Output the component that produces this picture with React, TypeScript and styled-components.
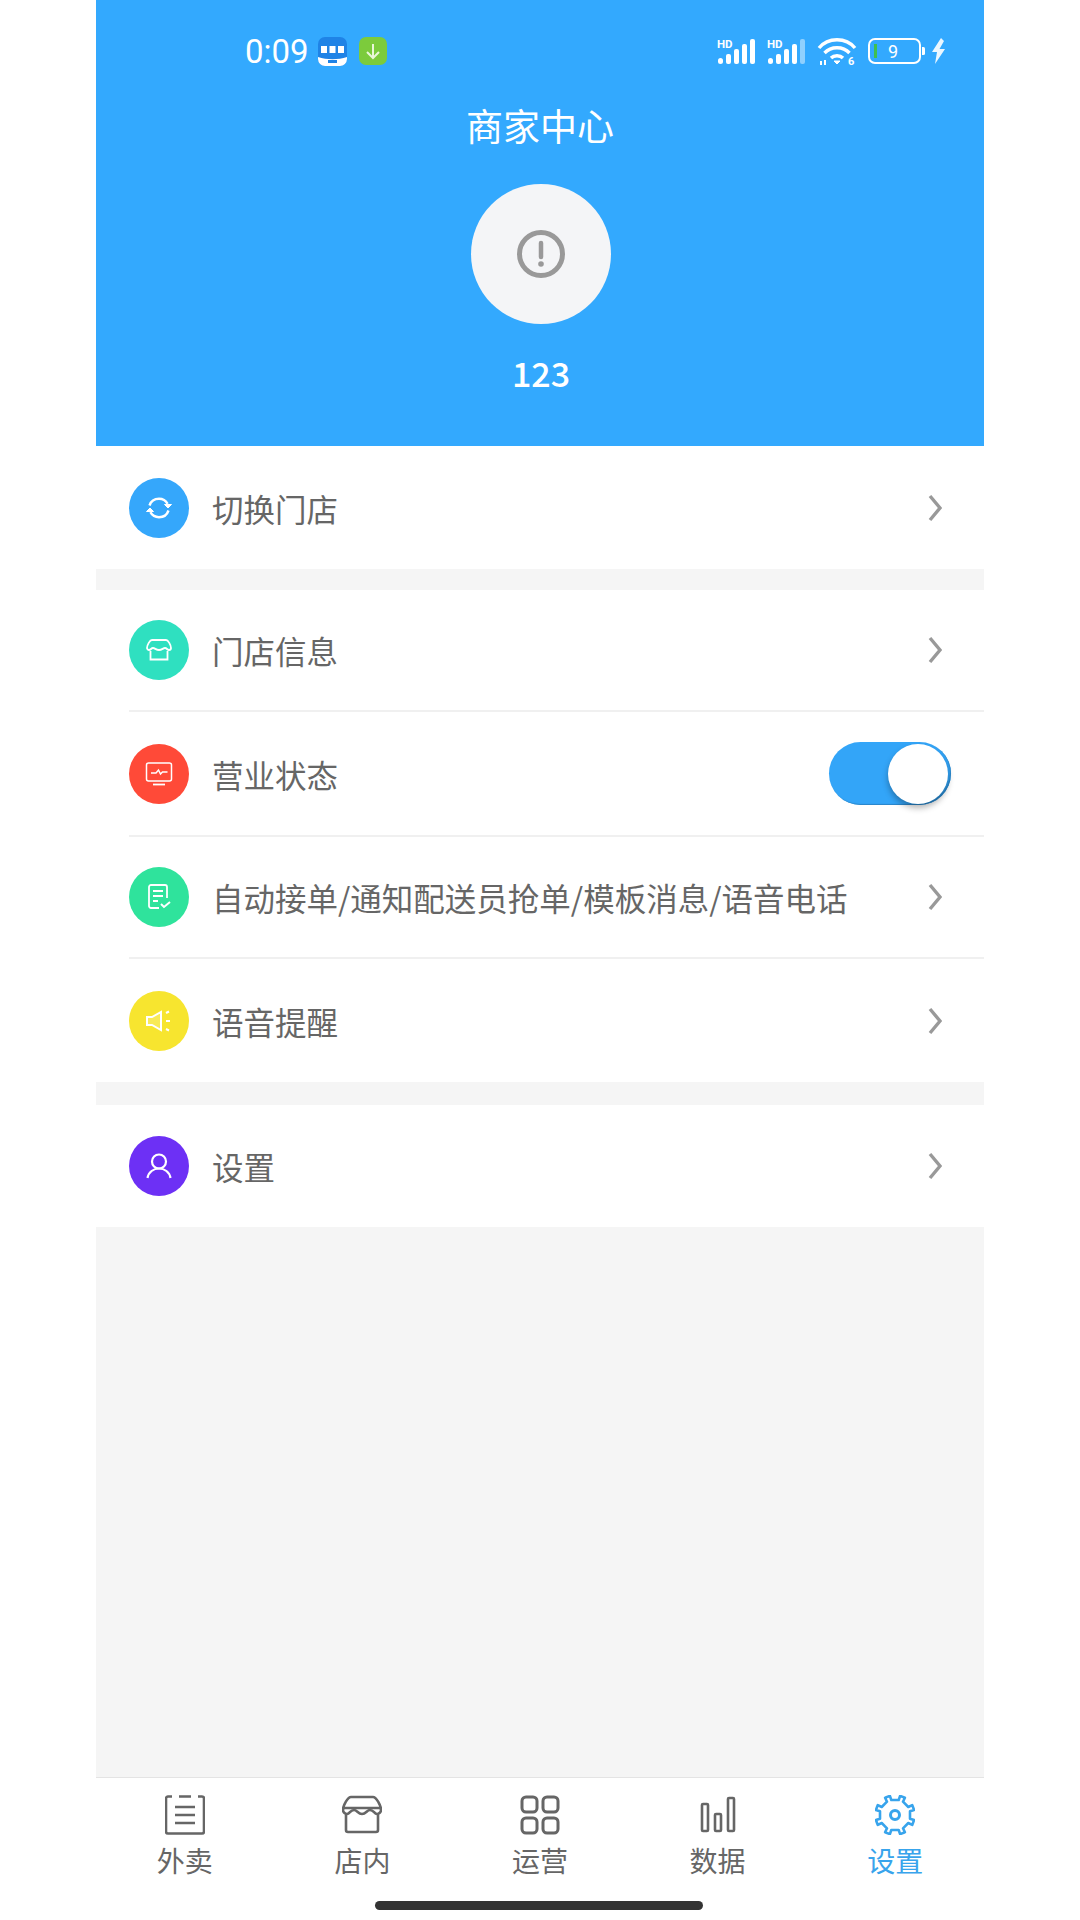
import styled, { createGlobalStyle } from 'styled-components';

const GlobalStyle = createGlobalStyle`
  html, body {
    margin: 0;
    padding: 0;
    background: #fff;
  }
  * {
    box-sizing: border-box;
  }
`;

const CJK = `"Noto Sans CJK SC", "Noto Sans", sans-serif`;

const Page = styled.div`
  width: 888px;
  height: 1920px;
  margin: 0 auto;
  display: flex;
  flex-direction: column;
  background: #f5f5f5;
  font-family: ${CJK};
`;

const Header = styled.header`
  height: 446px;
  flex: none;
  display: flex;
  flex-direction: column;
  align-items: center;
  background: #33a9fe;
  color: #fff;
`;

const StatusBar = styled.div`
  width: 100%;
  height: 102px;
  padding: 0 39px 0 149px;
  display: flex;
  align-items: center;
  justify-content: space-between;
`;

const StatusGroup = styled.div`
  display: flex;
  align-items: center;
`;

const Time = styled.span`
  font: 400 33px/1 Roboto, sans-serif;
  width: 73px;
`;

const AppBadge = styled.svg`
  display: block;
  margin-right: 12px;
`;

const SignalIcon = styled.svg`
  display: block;
  margin-right: 10px;
`;

const Title = styled.h1`
  margin: 0;
  height: 46px;
  font-size: 37px;
  line-height: 46px;
  font-weight: 400;
`;

const Avatar = styled.div`
  width: 140px;
  height: 140px;
  margin: 36px 0 0 2px;
  border-radius: 50%;
  background: #f4f5f7;
  display: flex;
  align-items: center;
  justify-content: center;
`;

const Name = styled.div`
  margin: 26px 0 0 2px;
  font-size: 34px;
  line-height: 46px;
  font-weight: 500;
`;

const Group = styled.section<{ $top?: number }>`
  flex: none;
  margin-top: ${(p) => p.$top ?? 0}px;
  padding-left: 33px;
  background: #fff;
`;

const Row = styled.div<{ $h: number; $line?: boolean }>`
  height: ${(p) => p.$h}px;
  padding-right: 33px;
  display: flex;
  align-items: center;
  border-bottom: ${(p) => (p.$line ? '2px solid #f0f0f0' : 'none')};
`;

const RowIcon = styled.div<{ $bg: string }>`
  width: 60px;
  height: 60px;
  flex: none;
  border-radius: 50%;
  background: ${(p) => p.$bg};
  display: flex;
  align-items: center;
  justify-content: center;
`;

const RowLabel = styled.span`
  flex: 1;
  margin-left: 23px;
  font-size: 31.5px;
  line-height: 44px;
  color: #666;
  white-space: nowrap;
`;

const Chevron = styled.svg`
  display: block;
  flex: none;
  margin-right: 9px;
`;

const Toggle = styled.div`
  width: 122px;
  height: 63px;
  margin-right: 0;
  padding: 2px;
  border-radius: 32px;
  background: #33a5f8;
  box-shadow: inset -1px -1px 1px #2b86c8;
  display: flex;
  justify-content: flex-end;
`;

const Knob = styled.div`
  width: 60px;
  height: 60px;
  margin-right: 1px;
  border-radius: 50%;
  background: #fff;
  box-shadow: 0 4px 6px rgba(0, 0, 0, 0.3);
`;

const Spacer = styled.div`
  flex: 1;
`;

const TabBar = styled.nav`
  height: 143px;
  flex: none;
  position: relative;
  display: flex;
  background: #fff;
  border-top: 1px solid #e4e4e4;
`;

const Tab = styled.div<{ $active?: boolean }>`
  flex: 1;
  padding-top: 17px;
  display: flex;
  flex-direction: column;
  align-items: center;
  color: ${(p) => (p.$active ? '#38a4ec' : '#666')};
`;

const TabLabel = styled.span`
  margin-top: 5px;
  font-size: 28px;
  line-height: 40px;
`;

const HomeIndicator = styled.div`
  position: absolute;
  left: 279px;
  bottom: 10px;
  width: 328px;
  height: 9px;
  border-radius: 5px;
  background: #333;
`;

const Arrow = () => (
  <Chevron width="14" height="28" viewBox="0 0 14 28" fill="none">
    <path d="M2 2l10 12L2 26" stroke="#999" strokeWidth="3.4" />
  </Chevron>
);

const Signal = ({ dim }: { dim?: boolean }) => (
  <SignalIcon width="40" height="26" viewBox="0 0 40 26" fill="#fff">
    <text x="0" y="9.5" fontFamily="Roboto, sans-serif" fontSize="11.5" fontWeight="700">HD</text>
    <rect x="1" y="20" width="5" height="6" rx="2.5" />
    <rect x="9" y="16" width="5" height="10" rx="2" />
    <rect x="17" y="11" width="5" height="15" rx="2" />
    <rect x="25" y="6" width="5" height="20" rx="2" />
    <rect x="33" y="1" width="5" height="25" rx="2" opacity={dim ? 0.45 : 1} />
  </SignalIcon>
);

const Wifi = () => (
  <SignalIcon width="40" height="28" viewBox="0 0 40 28" fill="none" stroke="#fff" strokeWidth="3.4" style={{ marginRight: 11 }}>
    <path d="M2 11C11 0 29 0 38 11" />
    <path d="M7.5 16C14 9 26 9 32.5 16" />
    <path d="M14 21c3-3 9-3 12 0" />
    <path d="M17 24l3 3 3-3z" fill="#fff" strokeWidth="1" />
    <path d="M4 24v4M8 23v5" strokeWidth="2" />
    <text x="31" y="27.5" fill="#fff" stroke="none" fontFamily="Roboto, sans-serif" fontSize="11" fontWeight="700">6</text>
  </SignalIcon>
);

const Battery = () => (
  <SignalIcon width="57" height="26" viewBox="0 0 57 26" fill="none" style={{ marginRight: 7 }}>
    <rect x="1" y="1" width="51" height="24" rx="6" stroke="#fff" strokeWidth="2" />
    <rect x="6" y="6" width="3" height="14" fill="#3fc04e" />
    <path d="M54 9h1.5a1.5 1.5 0 0 1 1.5 1.5v5a1.5 1.5 0 0 1-1.5 1.5H54z" fill="#fff" />
    <text x="20" y="20" fill="#fff" fontFamily="Roboto, sans-serif" fontSize="18">9</text>
  </SignalIcon>
);

const Bolt = () => (
  <svg width="13" height="26" viewBox="0 0 13 26" fill="#fff" style={{ display: 'block' }}>
    <path d="M9 0L0 14h5l-2 12 10-15H7.5L12 3z" opacity="0.9" />
  </svg>
);

const ShopBadge = () => (
  <AppBadge width="29" height="29" viewBox="0 0 29 29">
    <rect width="29" height="29" rx="7" fill="#1f83e6" />
    <path d="M0 20c9 3 20 3 29 0v2a7 7 0 0 1-7 7H7a7 7 0 0 1-7-7z" fill="#fff" />
    <rect x="3" y="9" width="6" height="7" fill="#fff" />
    <rect x="11.5" y="9" width="6" height="7" fill="#fff" />
    <rect x="20" y="9" width="6" height="7" fill="#fff" />
    <rect x="10" y="23" width="9" height="3" fill="#1f83e6" />
  </AppBadge>
);

const DownloadBadge = () => (
  <svg width="28" height="28" viewBox="0 0 28 28" fill="none" style={{ display: 'block' }}>
    <rect width="28" height="28" rx="7" fill="#7ccb3c" />
    <path d="M14 7v14M8 15l6 6 6-6" stroke="#eaf7d8" strokeWidth="2" />
  </svg>
);

const iconProps = { width: 30, height: 30, viewBox: '0 0 30 30', fill: 'none', stroke: '#fff', strokeWidth: 1.8 };

const SwapIcon = () => (
  <svg {...iconProps} strokeWidth={2.4}>
    <path d="M5.5 12.5C7 8 11 5.8 15 5.8c3.5 0 6.8 1.8 8.6 5" />
    <path d="M24.5 17.5C23 22 19 24.2 15 24.2c-3.5 0-6.8-1.8-8.6-5" />
    <path d="M20.5 11.5h7l-3.5 3.5zM9.5 18.5h-7l3.500-3.500z" fill="#fff" strokeWidth="1" />
  </svg>
);

const ShopIcon = () => (
  <svg {...iconProps}>
    <path d="M8 5h14c2 0 5 5 5 8 0 1-1 2-2 2-2 0-2-2-4-2s-3 2-6 2-4-2-6-2-2 2-4 2c-1 0-2-1-2-2 0-3 3-8 5-8z" />
    <path d="M6.500 16v8.500h17V16" />
    <path d="M4 12h22" opacity="0" />
  </svg>
);

const PulseIcon = () => (
  <svg {...iconProps} strokeWidth={1.5}>
    <rect x="2.500" y="4" width="25" height="18" rx="2" />
    <path d="M7 14h5l2.500-3 2 4 2-2h5" />
    <path d="M9 25.500h12" strokeWidth="1.800" />
  </svg>
);

const TaskIcon = () => (
  <svg {...iconProps}>
    <path d="M15 26H7a2 2 0 0 1-2-2V5a2 2 0 0 1 2-2h14a2 2 0 0 1 2 2v11" />
    <path d="M9 9h10M9 14h10M9 19h5" />
    <path d="M17 22l3 3 6-5" strokeWidth="2" />
  </svg>
);

const SpeakerIcon = () => (
  <svg {...iconProps} strokeWidth={2}>
    <path d="M3 11h5l9-5v18l-9-5H3z" fill="#fff" fillOpacity="0.2" />
    <path d="M22 7l3-1.500M22 15h4M22 23l3 1.500" />
  </svg>
);

const UserIcon = () => (
  <svg {...iconProps} strokeWidth={2.2}>
    <circle cx="15" cy="10.500" r="7" />
    <path d="M3.500 27c1-6 6-9.500 11.500-9.500S25.500 21 26.500 27" />
  </svg>
);

// 8-tooth gear outline
const gearPath = () => {
  const points: string[] = [];
  for (let i = 0; i < 8; i++) {
    const a = (i * Math.PI) / 4 - Math.PI / 8;
    [
      [15.5, -0.15],
      [19.8, -0.13],
      [19.8, 0.13],
      [15.5, 0.15],
    ].forEach(([r, d]) => {
      const t = a + d;
      points.push(`${(20 + r * Math.cos(t)).toFixed(1)} ${(20 + r * Math.sin(t)).toFixed(1)}`);
    });
  }
  return `M${points.join('L')}Z`;
};

const tabIconProps = { width: 40, height: 40, viewBox: '0 0 40 40', fill: 'none', stroke: 'currentColor', strokeWidth: 2.6 };

const ReceiptTab = () => (
  <svg {...tabIconProps}>
    <path d="M7 1.500H3a2 2 0 0 0-2 2v33a2 2 0 0 0 2 2h34a2 2 0 0 0 2-2v-33a2 2 0 0 0-2-2h-4M14 1.500h12" />
    <path d="M10 12h20M10 20h20M10 28h20" />
  </svg>
);

const ShopTab = () => (
  <svg {...tabIconProps}>
    <path d="M9 2h22c3 0 8 8 8 13 0 2-2 4-4 4-3 0-3-4-7-4-3 0-4 4-8 4s-5-4-8-4c-4 0-4 4-7 4-2 0-4-2-4-4C1 10 6 2 9 2z" />
    <path d="M2 13h36" />
    <path d="M4 20v15a2 2 0 0 0 2 2h28a2 2 0 0 0 2-2V20" />
  </svg>
);

const GridTab = () => (
  <svg {...tabIconProps} strokeWidth={3}>
    <rect x="2" y="2" width="15" height="15" rx="4" />
    <rect x="23" y="2" width="15" height="15" rx="4" />
    <rect x="2" y="23" width="15" height="15" rx="4" />
    <rect x="23" y="23" width="15" height="15" rx="4" />
  </svg>
);

const BarsTab = () => (
  <svg {...tabIconProps}>
    <rect x="4" y="9" width="6" height="27" rx="1" />
    <rect x="17" y="19" width="6" height="17" rx="1" />
    <rect x="30" y="3" width="6" height="33" rx="1" />
  </svg>
);

const GearTab = () => (
  <svg {...tabIconProps} strokeLinejoin="round">
    <path d={gearPath()} />
    <circle cx="20" cy="20" r="4.500" strokeWidth="3" />
  </svg>
);

const TABS = [
  { label: '外卖', icon: <ReceiptTab /> },
  { label: '店内', icon: <ShopTab /> },
  { label: '运营', icon: <GridTab /> },
  { label: '数据', icon: <BarsTab /> },
  { label: '设置', icon: <GearTab />, active: true },
];

const App = () => {
  return (
    <>
      <GlobalStyle />
      <Page>
        <Header>
          <StatusBar>
            <StatusGroup>
              <Time>0:09</Time>
              <ShopBadge />
              <DownloadBadge />
            </StatusGroup>
            <StatusGroup>
              <Signal />
              <Signal dim />
              <Wifi />
              <Battery />
              <Bolt />
            </StatusGroup>
          </StatusBar>
          <Title>商家中心</Title>
          <Avatar>
            <svg width="48" height="48" viewBox="0 0 48 48" fill="none">
              <circle cx="24" cy="24" r="21.500" stroke="#999" strokeWidth="5" />
              <path d="M24 13v14" stroke="#999" strokeWidth="4.500" strokeLinecap="round" />
              <circle cx="24" cy="34" r="2.800" fill="#999" />
            </svg>
          </Avatar>
          <Name>123</Name>
        </Header>

        <Group>
          <Row $h={123}>
            <RowIcon $bg="#35a7fb"><SwapIcon /></RowIcon>
            <RowLabel>切换门店</RowLabel>
            <Arrow />
          </Row>
        </Group>

        <Group $top={21}>
          <Row $h={122} $line>
            <RowIcon $bg="#2fe0c0"><ShopIcon /></RowIcon>
            <RowLabel>门店信息</RowLabel>
            <Arrow />
          </Row>
          <Row $h={125} $line>
            <RowIcon $bg="#ff4a38"><PulseIcon /></RowIcon>
            <RowLabel>营业状态</RowLabel>
            <Toggle><Knob /></Toggle>
          </Row>
          <Row $h={122} $line>
            <RowIcon $bg="#2fe39c"><TaskIcon /></RowIcon>
            <RowLabel>自动接单/通知配送员抢单/模板消息/语音电话</RowLabel>
            <Arrow />
          </Row>
          <Row $h={123}>
            <RowIcon $bg="#f7e52f"><SpeakerIcon /></RowIcon>
            <RowLabel>语音提醒</RowLabel>
            <Arrow />
          </Row>
        </Group>

        <Group $top={23}>
          <Row $h={122}>
            <RowIcon $bg="#6d30f5"><UserIcon /></RowIcon>
            <RowLabel>设置</RowLabel>
            <Arrow />
          </Row>
        </Group>

        <Spacer />

        <TabBar>
          {TABS.map((tab) => (
            <Tab key={tab.label} $active={tab.active}>
              {tab.icon}
              <TabLabel>{tab.label}</TabLabel>
            </Tab>
          ))}
          <HomeIndicator />
        </TabBar>
      </Page>
    </>
  );
};

export default App;
